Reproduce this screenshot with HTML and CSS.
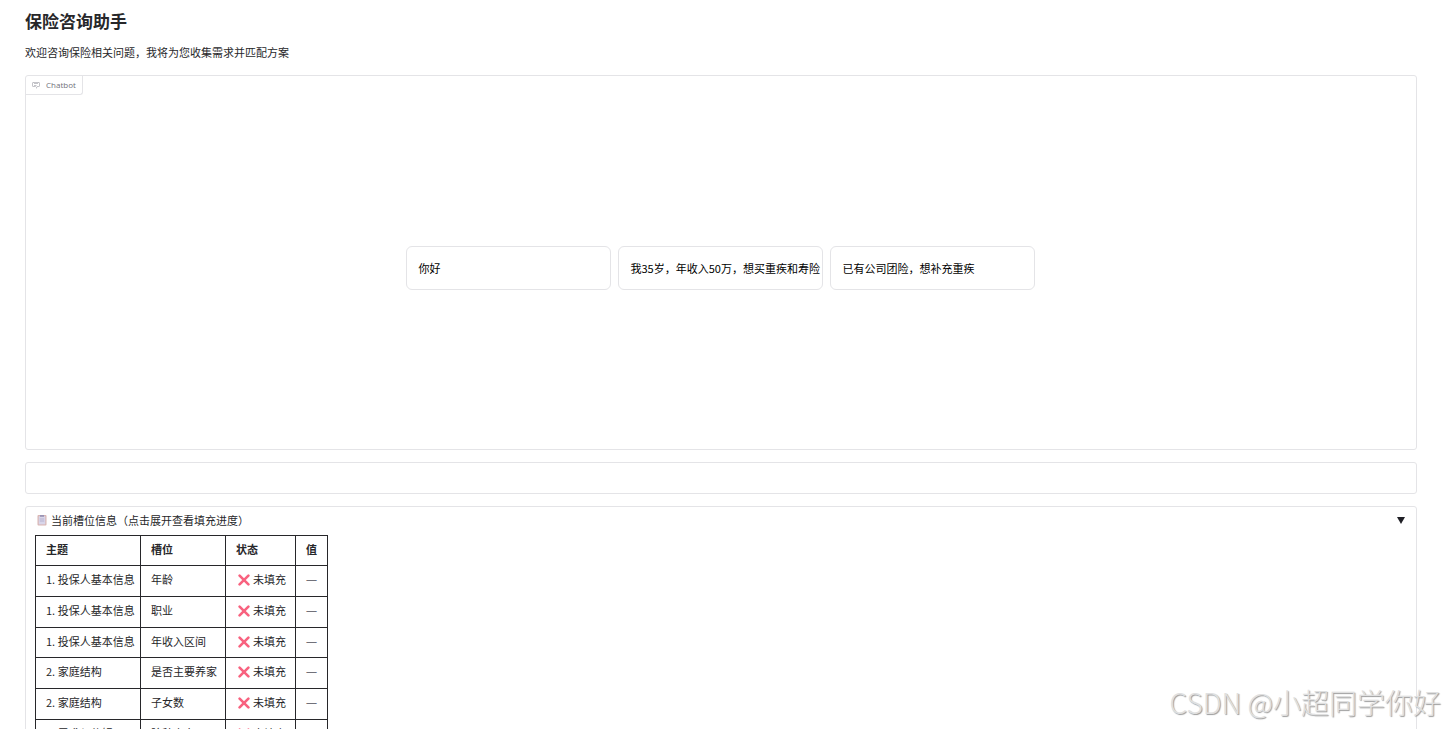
FILE: index.html
```
<!DOCTYPE html>
<html lang="zh-CN">
<head>
<meta charset="utf-8">
<meta name="viewport" content="width=device-width, initial-scale=1">
<title>保险咨询助手</title>
<link rel="stylesheet" href="styles.css">
</head>
<body>
<svg class="defs" width="0" height="0">
  <symbol id="cross" viewBox="0 0 12 12">
    <path d="M1.6 1.6 L10.4 10.4 M10.4 1.6 L1.6 10.4" fill="none" stroke="#f8627f" stroke-width="2.6" stroke-linecap="round"/>
  </symbol>
</svg>
<main class="app">
  <h1>保险咨询助手</h1>
  <p class="intro">欢迎咨询保险相关问题，我将为您收集需求并匹配方案</p>

  <section class="block chatbot">
    <div class="label">
      <svg width="8" height="8" viewBox="0 0 32 32"><path fill="#8a8a93" d="M17.7 30 16 29l4-7h6a2 2 0 0 0 2-2V8a2 2 0 0 0-2-2H6a2 2 0 0 0-2 2v12a2 2 0 0 0 2 2h9v2H6a4 4 0 0 1-4-4V8a4 4 0 0 1 4-4h20a4 4 0 0 1 4 4v12a4 4 0 0 1-4 4h-4.8z"/><path fill="#8a8a93" d="M8 10h16v2H8zM8 16h10v2H8z"/></svg>
      <span>Chatbot</span>
    </div>
    <div class="examples">
      <button type="button">你好</button>
      <button type="button">我35岁，年收入50万，想买重疾和寿险</button>
      <button type="button">已有公司团险，想补充重疾</button>
    </div>
  </section>

  <input class="block message" type="text" aria-label="消息">

  <section class="block slots">
    <button class="slots-head" type="button">
      <svg width="10" height="12" viewBox="0 0 10 12"><rect x="0.5" y="1" width="9" height="10.5" rx="1" fill="#d9b5b2"/><rect x="1.7" y="2.2" width="6.6" height="8.2" fill="#d9d6ea"/><rect x="3" y="1" width="4" height="1.8" fill="#9a94b4"/><path d="M2.8 5h4.4M2.8 7h4.4" stroke="#a9a5c4" stroke-width="0.7"/></svg>
      <span>当前槽位信息（点击展开查看填充进度）</span>
      <svg class="arrow" width="8" height="7" viewBox="0 0 8 7"><path d="M0 0h8L4 7z" fill="#1f1f25"/></svg>
    </button>
    <table>
      <thead>
        <tr><th class="topic">主题</th><th class="slot">槽位</th><th class="state">状态</th><th class="value">值</th></tr>
      </thead>
      <tbody>
        <tr><td>1. 投保人基本信息</td><td>年龄</td><td><svg class="x"><use href="#cross"/></svg>未填充</td><td class="empty">—</td></tr>
        <tr><td>1. 投保人基本信息</td><td>职业</td><td><svg class="x"><use href="#cross"/></svg>未填充</td><td class="empty">—</td></tr>
        <tr><td>1. 投保人基本信息</td><td>年收入区间</td><td><svg class="x"><use href="#cross"/></svg>未填充</td><td class="empty">—</td></tr>
        <tr><td>2. 家庭结构</td><td>是否主要养家</td><td><svg class="x"><use href="#cross"/></svg>未填充</td><td class="empty">—</td></tr>
        <tr><td>2. 家庭结构</td><td>子女数</td><td><svg class="x"><use href="#cross"/></svg>未填充</td><td class="empty">—</td></tr>
        <tr><td>3. 需求与偏好</td><td>险种意向</td><td><svg class="x"><use href="#cross"/></svg>未填充</td><td class="empty">—</td></tr>
      </tbody>
    </table>
  </section>
</main>
<div class="watermark">CSDN @小超同学你好</div>
</body>
</html>
```
FILE: styles.css
```
* {
  box-sizing: border-box;
}
body {
  margin: 0;
  height: 100vh;
  overflow: hidden;
  background: #fff;
  color: #27272a;
  font-family: "Noto Sans CJK SC", sans-serif;
  font-size: 11px;
  line-height: 14px;
}
button, input {
  font: inherit;
  color: inherit;
}
.defs {
  position: absolute;
}
.app {
  display: flex;
  flex-direction: column;
  gap: 12px;
  padding: 9px 26px 0 25px;
}
h1 {
  margin: 0;
  font-size: 17px;
  line-height: 24px;
}
.intro {
  margin: 0 0 4px;
}
.block {
  border: 1px solid #e4e4e7;
  border-radius: 3px;
  background: #fff;
}
.chatbot {
  display: flex;
  flex-direction: column;
  height: 375px;
}
.label {
  display: flex;
  align-items: center;
  align-self: flex-start;
  gap: 6px;
  height: 19px;
  padding: 0 6px;
  border: solid #e4e4e7;
  border-width: 0 1px 1px 0;
  border-bottom-right-radius: 3px;
  color: #71717a;
  font-family: "Open Sans", sans-serif;
  font-size: 8px;
}
.examples {
  flex: 1;
  display: grid;
  grid-template-columns: repeat(3, 205px);
  gap: 7px;
  align-content: center;
  justify-content: center;
  padding: 0 2px 8px 0;
}
.examples button {
  height: 44px;
  padding: 0 12px;
  border: 1px solid #e4e4e7;
  border-radius: 6px;
  background: #fff;
  color: #000;
  text-align: left;
  white-space: nowrap;
}
.message {
  width: 100%;
  height: 32px;
  padding: 0 10px;
}
.slots {
  padding: 5px 9px 10px;
}
.slots-head {
  display: flex;
  align-items: center;
  gap: 4px;
  width: 100%;
  height: 16px;
  margin-bottom: 7px;
  padding: 0 2px;
  border: 0;
  background: none;
}
.arrow {
  margin-left: auto;
}
table {
  border-collapse: collapse;
  table-layout: fixed;
  width: 293px;
}
th, td {
  height: 31px;
  padding: 0 10px 4px;
  border: 1px solid #27272a;
  text-align: left;
  white-space: nowrap;
}
th,
tbody tr:nth-child(3n) td {
  height: 30px;
}
.topic {
  width: 105px;
}
.slot {
  width: 85px;
}
.state {
  width: 70px;
}
.empty {
  color: #71717a;
  font-family: "Open Sans", sans-serif;
}
.x {
  width: 12px;
  height: 12px;
  margin: 0 3px 0 2px;
  vertical-align: -2px;
}
.watermark {
  position: absolute;
  right: 2px;
  bottom: 6px;
  color: #e0e0e0;
  font-family: "Noto Sans CJK SC", sans-serif;
  font-size: 28px;
  font-weight: 300;
  line-height: 42px;
  text-shadow: 1px 1px 1px #999;
}
```
